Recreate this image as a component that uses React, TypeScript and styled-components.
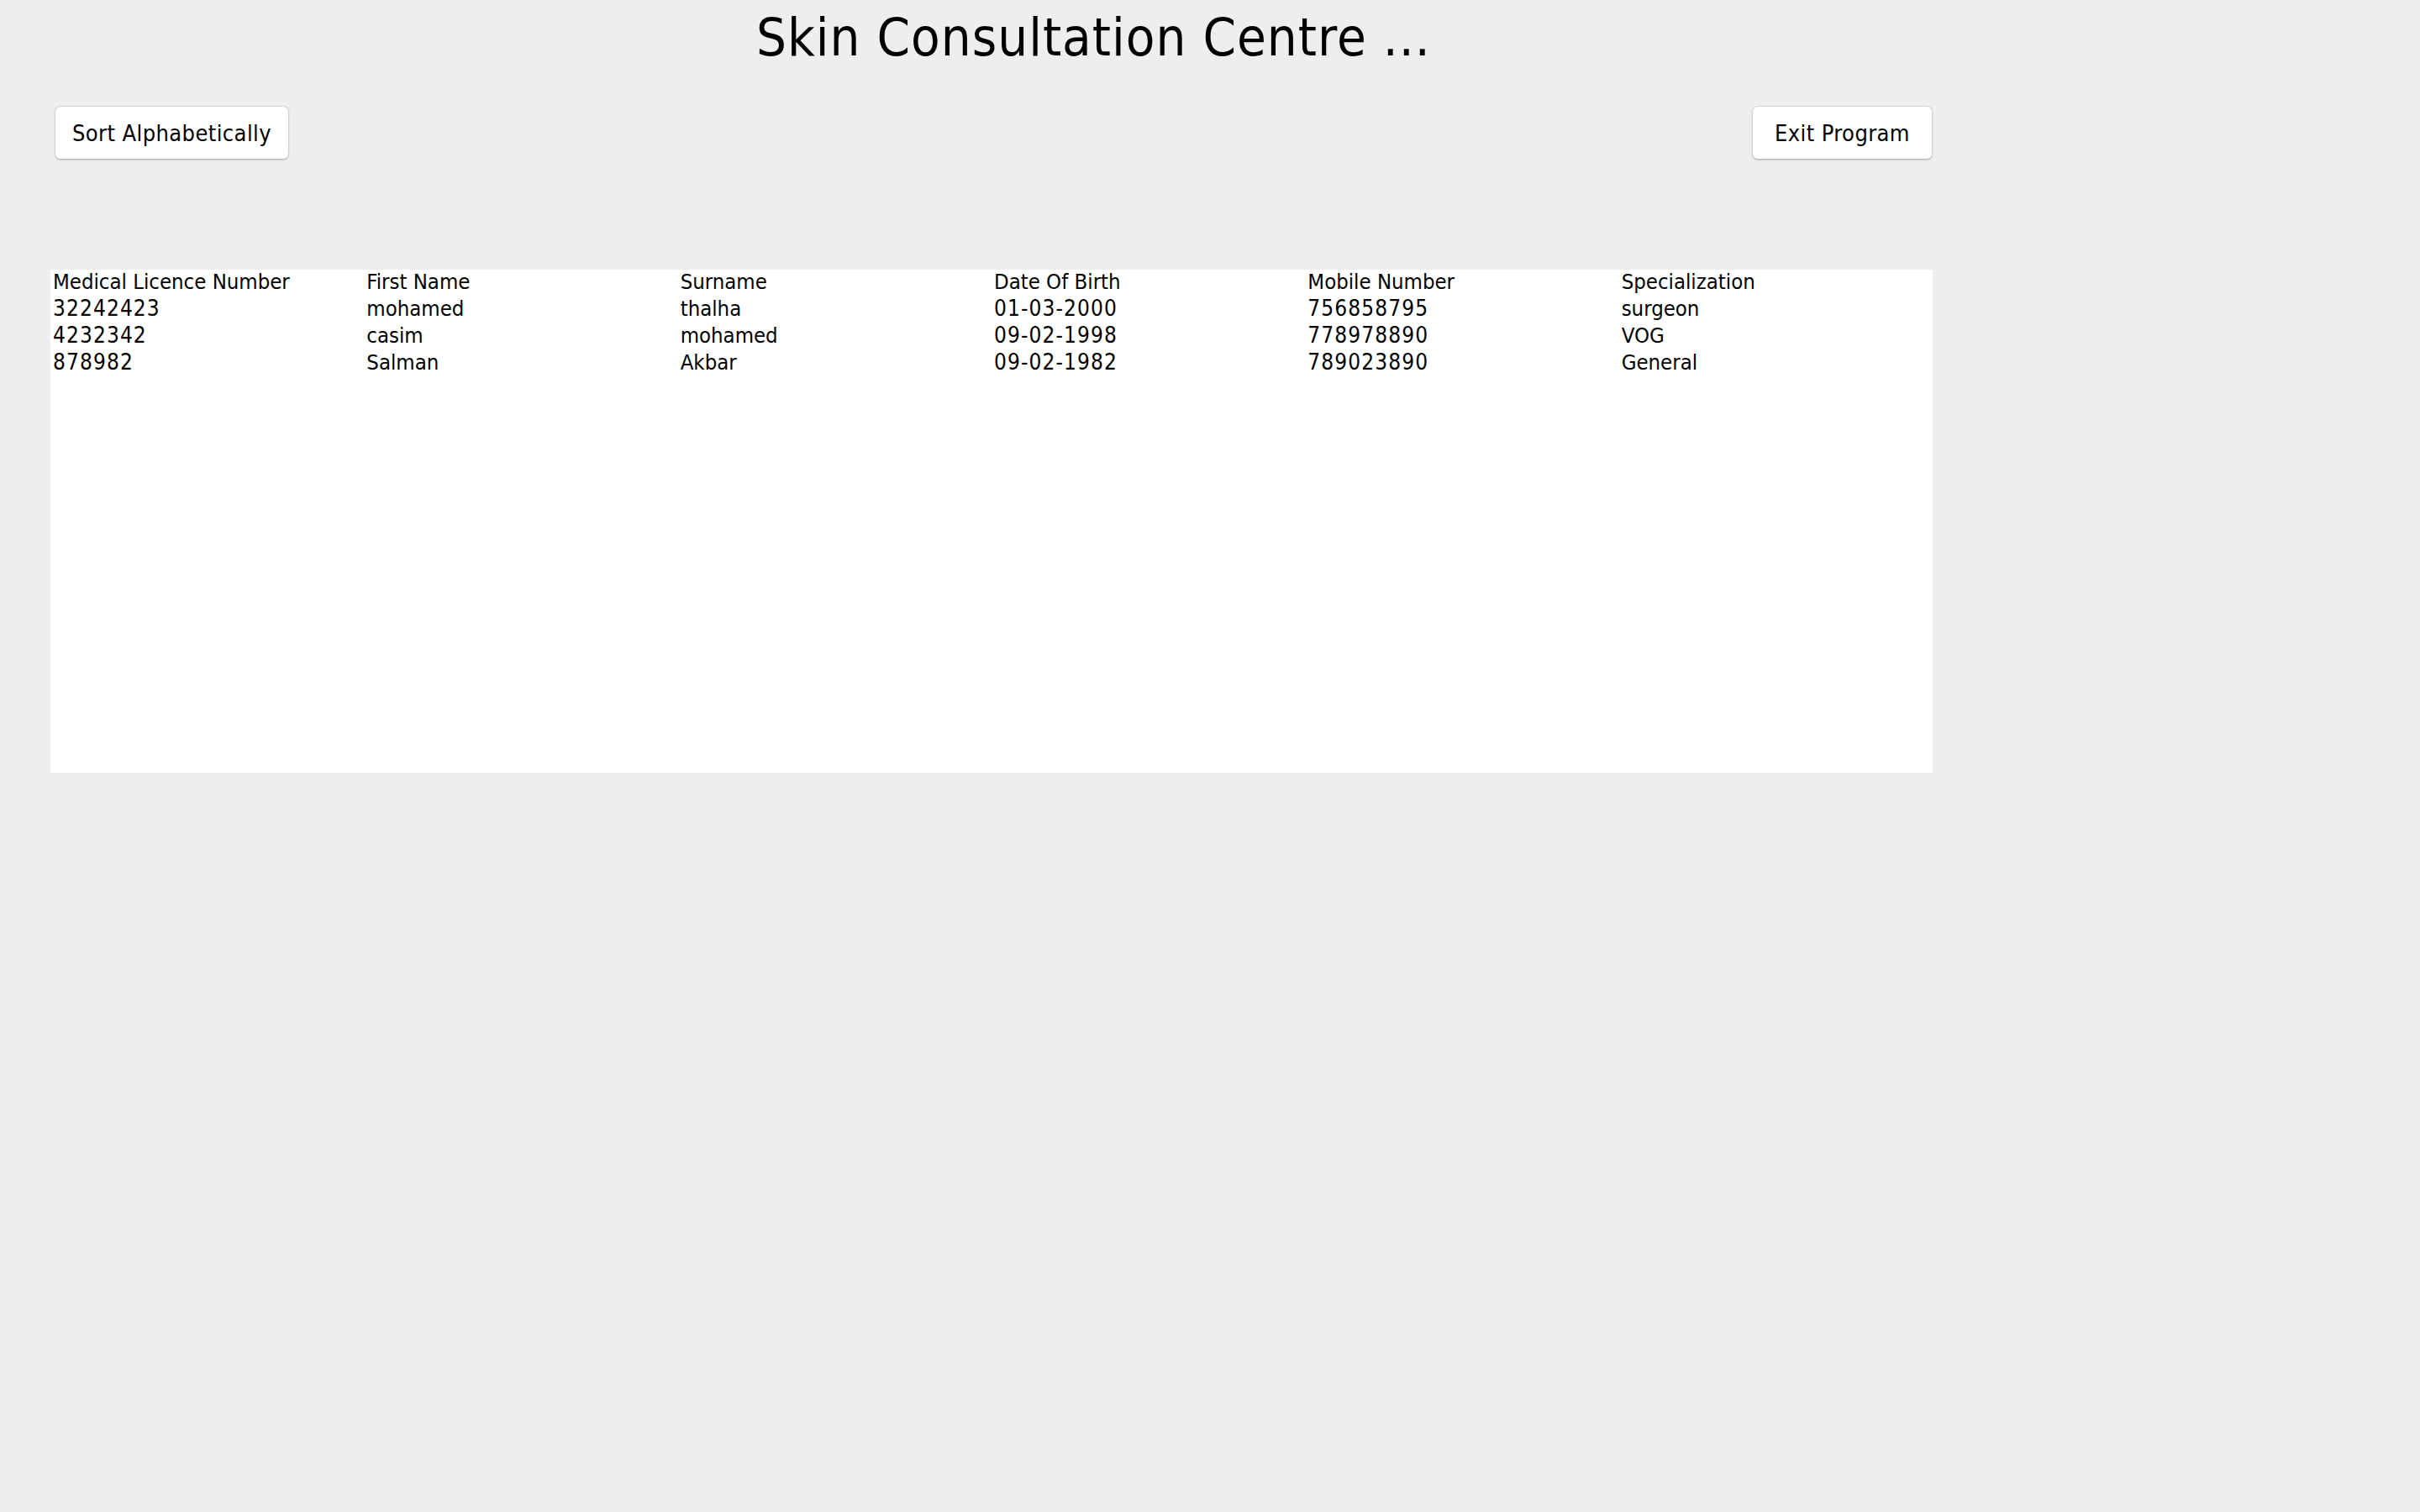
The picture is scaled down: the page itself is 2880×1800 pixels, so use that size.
import styled, { createGlobalStyle } from 'styled-components';

const GlobalStyle = createGlobalStyle`
	body {
		margin: 0;
		background: #eeeeee;
		font-family: "DejaVu Sans Condensed", "DejaVu Sans", "Liberation Sans", sans-serif;
		font-stretch: condensed;
		color: #000;
	}
`;

const Frame = styled.div`
	width: 2240px;
	padding: 0 60px;
	min-height: 1800px;
`;

const Title = styled.h1`
	margin: 0;
	padding: 13px 0 0 840px;
	font-size: 63px;
	font-weight: normal;
	line-height: 63px;
	letter-spacing: 1px;
	white-space: nowrap;
`;

const Toolbar = styled.div`
	display: flex;
	justify-content: space-between;
	align-items: center;
	margin-top: 50px;
	padding-left: 5px;
`;

const Button = styled.button<{ $width: number }>`
	width: ${props => props.$width}px;
	height: 64px;
	padding: 0;
	background: #ffffff;
	border: 1px solid #d3d3d3;
	border-bottom-color: #b9b9b9;
	border-radius: 7px;
	box-shadow: 0 1px 2px rgba(0, 0, 0, 0.14);
	font-family: inherit;
	font-stretch: condensed;
	font-size: 27px;
	letter-spacing: 0.4px;
	color: #000;
`;

const Table = styled.div`
	margin-top: 131px;
	height: 599px;
	background: #ffffff;
	display: grid;
	grid-template-columns: repeat(6, 1fr);
	grid-auto-rows: 32px;
	align-content: start;
`;

const Cell = styled.div<{ $numeric?: boolean }>`
	padding-left: 3px;
	font-size: ${props => (props.$numeric ? '26px' : '25.5px')};
	letter-spacing: ${props => (props.$numeric ? '1.1px' : '0')};
	line-height: 29px;
	white-space: nowrap;
	overflow: hidden;
`;

interface Doctor {
	licence: string;
	firstName: string;
	surname: string;
	dob: string;
	mobile: string;
	specialization: string;
}

const headers = ['Medical Licence Number', 'First Name', 'Surname', 'Date Of Birth', 'Mobile Number', 'Specialization'];

const doctors: Doctor[] = [
	{ licence: '32242423', firstName: 'mohamed', surname: 'thalha', dob: '01-03-2000', mobile: '756858795', specialization: 'surgeon' },
	{ licence: '4232342', firstName: 'casim', surname: 'mohamed', dob: '09-02-1998', mobile: '778978890', specialization: 'VOG' },
	{ licence: '878982', firstName: 'Salman', surname: 'Akbar', dob: '09-02-1982', mobile: '789023890', specialization: 'General' },
];

const isNumeric = (v: string) => /^[0-9-]+$/.test(v);

function App() {
	return (
		<Frame>
			<GlobalStyle />
			<Title>Skin Consultation Centre ...</Title>
			<Toolbar>
				<Button $width={279}>Sort Alphabetically</Button>
				<Button $width={215}>Exit Program</Button>
			</Toolbar>
			<Table>
				{headers.map(h => (
					<Cell key={h}>{h}</Cell>
				))}
				{doctors.map(d =>
					[d.licence, d.firstName, d.surname, d.dob, d.mobile, d.specialization].map((v, i) => (
						<Cell key={d.licence + i} $numeric={isNumeric(v)}>
							{v}
						</Cell>
					)),
				)}
			</Table>
		</Frame>
	);
}

export default App;
